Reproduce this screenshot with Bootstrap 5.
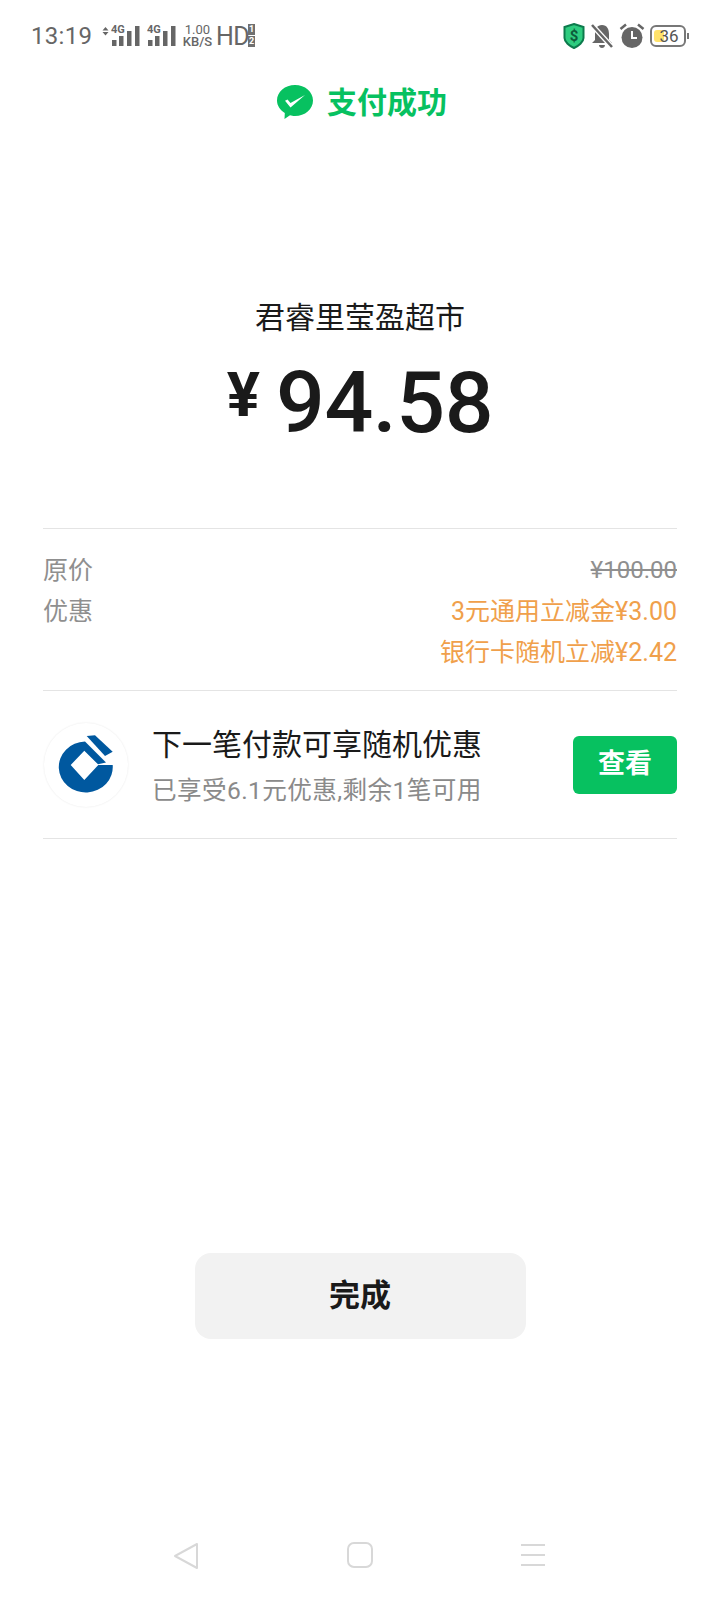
<!DOCTYPE html>
<html lang="zh-CN">
<head>
    <meta charset="UTF-8">
    <meta name="viewport" content="width=device-width, initial-scale=1.0">
    <title>支付成功</title>
    <link href="https://cdn.jsdelivr.net/npm/bootstrap@5.3.0/dist/css/bootstrap.min.css" rel="stylesheet">
    <style>
        body {
            height: 1600px;
            background: #fff;
            font-family: Roboto, "Noto Sans CJK SC", sans-serif;
            color: #1a1a1a;
        }
        .status-bar {
            height: 72px;
            padding: 0 30px 0 31px;
            color: #666;
        }
        .status-time { font-size: 24px; line-height: 1; width: 70px; letter-spacing: .3px; }
        .status-sig { margin-left: 6px; }
        .status-speed { font-size: 13px; line-height: 12px; width: 31px; margin-left: 5px; text-align: center; }
        .status-speed span { display: block; }
        .status-speed span + span { font-weight: 500; }
        .status-hd { font-size: 25px; line-height: 1; letter-spacing: -.5px; width: 32px; margin-left: 3px; }
        .sim-tag {
            display: block;
            width: 7px;
            height: 11px;
            margin-bottom: 1px;
            background: #707070;
            color: #fff;
            font-size: 9px;
            font-weight: 700;
            line-height: 11px;
            text-align: center;
        }
        .status-right { gap: 5px; }
        .pay-title {
            height: 60px;
            padding-left: 4px;
            color: #07c160;
            font-size: 30px;
            font-weight: 700;
        }
        .pay-logo { margin-right: 14px; }
        .shop-name { margin-top: 164px; font-size: 30px; line-height: 44px; }
        .amount-line { margin-top: 13px; height: 100px; }
        .amount-sign { font-size: 62px; font-weight: 700; line-height: 1; margin-right: 16px; margin-top: -16px; }
        .amount-num { font-size: 86px; font-weight: 500; line-height: 1; letter-spacing: -.4px; }
        .info-block { margin: 0 43px; }
        .price-box {
            margin-top: 75px;
            border-top: 1px solid #e4e4e4;
            padding: 21px 0 17px;
            font-size: 25px;
            line-height: 41px;
            color: #8f8f8f;
        }
        .price-old { text-decoration: line-through; font-size: 24px; }
        .price-cut { color: #f0a04b; }
        .promo-box {
            height: 149px;
            border-top: 1px solid #e4e4e4;
            border-bottom: 1px solid #e4e4e4;
        }
        .bank-logo {
            width: 84px;
            height: 84px;
            border-radius: 50%;
            box-shadow: 0 0 2px rgba(0, 0, 0, .1);
            flex: none;
            margin: 0 24px 0 1px;
        }
        .promo-text { padding-top: 3px; }
        .promo-title { font-size: 30px; line-height: 44px; color: #1a1a1a; }
        .promo-sub { font-size: 24.6px; line-height: 36px; color: #8a8a8a; margin-top: 6px; letter-spacing: .4px; }
        .look-btn {
            width: 104px;
            height: 58px;
            border: 0;
            border-radius: 6px;
            background: #07c160;
            color: #fff;
            font-size: 27px;
            font-weight: 700;
            padding: 0;
        }
        .done-btn {
            width: 331px;
            height: 86px;
            margin: 414px auto 0;
            border: 0;
            border-radius: 16px;
            background: #f2f2f2;
            color: #1a1a1a;
            font-size: 31px;
            font-weight: 700;
            display: block;
            padding: 0;
        }
        .nav-keys {
            margin-top: auto;
            height: 58px;
            padding: 0 175px 0 173px;
        }
    </style>
</head>
<body class="d-flex flex-column">
    <div class="status-bar d-flex align-items-center">
        <div class="status-time">13:19</div>
        <svg width="10" height="20" viewBox="0 0 10 20" fill="#666"><path d="M4.500 1l3 3.500h-6zM1.500 6h6l-3 3.500z"/></svg>
        <svg width="30" height="24" viewBox="0 0 30 24" fill="#666">
            <text x="0" y="9" font-size="11" font-weight="700" font-family="Roboto">4G</text>
            <rect x="1" y="16" width="4.500" height="6"/><rect x="8" y="12" width="4.500" height="10"/><rect x="16" y="7" width="4.500" height="15"/><rect x="24" y="2" width="4.500" height="20"/>
        </svg>
        <svg width="30" height="24" viewBox="0 0 30 24" fill="#666" class="status-sig">
            <text x="0" y="9" font-size="11" font-weight="700" font-family="Roboto">4G</text>
            <rect x="1" y="16" width="4.500" height="6"/><rect x="8" y="12" width="4.500" height="10"/><rect x="16" y="7" width="4.500" height="15"/><rect x="24" y="2" width="4.500" height="20"/>
        </svg>
        <div class="status-speed"><span>1.00</span><span>KB/S</span></div>
        <div class="status-hd">HD</div>
        <div><span class="sim-tag">1</span><span class="sim-tag">2</span></div>

        <div class="status-right ms-auto d-flex align-items-center">
            <svg width="22" height="26" viewBox="0 0 22 26">
                <path d="M11 1l9.500 3v11c0 4-5 8-9.500 10C6.500 23 1.500 19 1.500 15V4z" fill="#2ecc7f" stroke="#0c7a4c" stroke-width="2"/>
                <text x="11" y="18" font-size="15" font-weight="700" text-anchor="middle" fill="#0c5a3a" font-family="Roboto">$</text>
            </svg>
            <svg width="24" height="26" viewBox="0 0 24 26" fill="#666">
                <path d="M12 2c5 0 7 4 7 9v6l3 3H2l3-3v-6c0-5 2-9 7-9zM9 22h6c0 2-1.500 3-3 3s-3-1-3-3z"/>
                <path d="M2 2l20 22" stroke="#fff" stroke-width="5"/>
                <path d="M2 2l20 22" stroke="#666" stroke-width="2.500"/>
            </svg>
            <svg width="26" height="26" viewBox="0 0 26 26">
                <circle cx="13" cy="14.500" r="10.500" fill="#666"/>
                <path d="M13 8v7h5" fill="none" stroke="#fff" stroke-width="2"/>
                <path d="M1.500 6L7 1.500M24.500 6L19 1.500" stroke="#666" stroke-width="2.500" fill="none"/>
            </svg>
            <svg width="40" height="22" viewBox="0 0 40 22">
                <rect x="1" y="1" width="34" height="20" rx="5" fill="#fff" stroke="#777" stroke-width="2"/>
                <rect x="4" y="5" width="10" height="12" rx="3" fill="#ffe26a"/>
                <rect x="37" y="8" width="2" height="6" fill="#777"/>
                <text x="19" y="17" font-size="17" text-anchor="middle" fill="#555" font-family="Roboto">36</text>
            </svg>
        </div>
    </div>

    <div class="pay-title d-flex align-items-center justify-content-center">
        <svg class="pay-logo" width="36" height="34" viewBox="0 0 36 34">
            <path d="M18 0c10 0 18 6.800 18 15.500S28 31 18 31c-2 0-3.500-.3-5-.7L7.500 34l.3-6C3 25 0 20.500 0 15.500 0 6.800 8 0 18 0z" fill="#07c160"/>
            <path d="M8 15.700l2.500-1.200 3 3.500L28 10 13.500 22.500z" fill="#fff"/>
        </svg>
        <span>支付成功</span>
    </div>

    <div class="shop-name text-center">君睿里莹盈超市</div>
    <div class="amount-line d-flex align-items-center justify-content-center">
        <span class="amount-sign">¥</span>
        <span class="amount-num">94.58</span>
    </div>

    <div class="info-block">
        <div class="price-box">
            <div class="d-flex justify-content-between"><span>原价</span><span class="price-old">¥100.00</span></div>
            <div class="d-flex justify-content-between"><span>优惠</span><span class="price-cut">3元通用立减金¥3.00</span></div>
            <div class="text-end price-cut">银行卡随机立减¥2.42</div>
        </div>
        <div class="promo-box d-flex align-items-center">
            <svg class="bank-logo" viewBox="0 0 84 84">
                <path d="M41 18.500A27 25.500 0 1 0 68.700 42H54.300L40.300 57 26.700 42 40.300 27.700 54 41.300 62 39.500z" fill="#00589f"/>
                <path d="M42.700 13L51 12.300 68.700 28.700 61 33z" fill="#00589f"/>
            </svg>
            <div class="promo-text flex-grow-1">
                <div class="promo-title">下一笔付款可享随机优惠</div>
                <div class="promo-sub">已享受6.1元优惠,剩余1笔可用</div>
            </div>
            <button class="look-btn" type="button">查看</button>
        </div>
    </div>

    <button class="done-btn" type="button">完成</button>

    <div class="nav-keys d-flex justify-content-between align-items-start">
        <svg width="26" height="28" viewBox="0 0 26 28" fill="none" stroke="#d8d8d8" stroke-width="2" stroke-linejoin="round">
            <path d="M24 2v24L2 14z"/>
        </svg>
        <svg width="26" height="26" viewBox="0 0 26 26" fill="none" stroke="#d8d8d8" stroke-width="2">
            <rect x="1" y="1" width="24" height="24" rx="6"/>
        </svg>
        <svg width="24" height="26" viewBox="0 0 24 26" stroke="#d8d8d8" stroke-width="2">
            <path d="M0 3h24M0 13h24M0 23h24"/>
        </svg>
    </div>

    <script src="https://cdn.jsdelivr.net/npm/bootstrap@5.3.0/dist/js/bootstrap.bundle.min.js"></script>
</body>
</html>
